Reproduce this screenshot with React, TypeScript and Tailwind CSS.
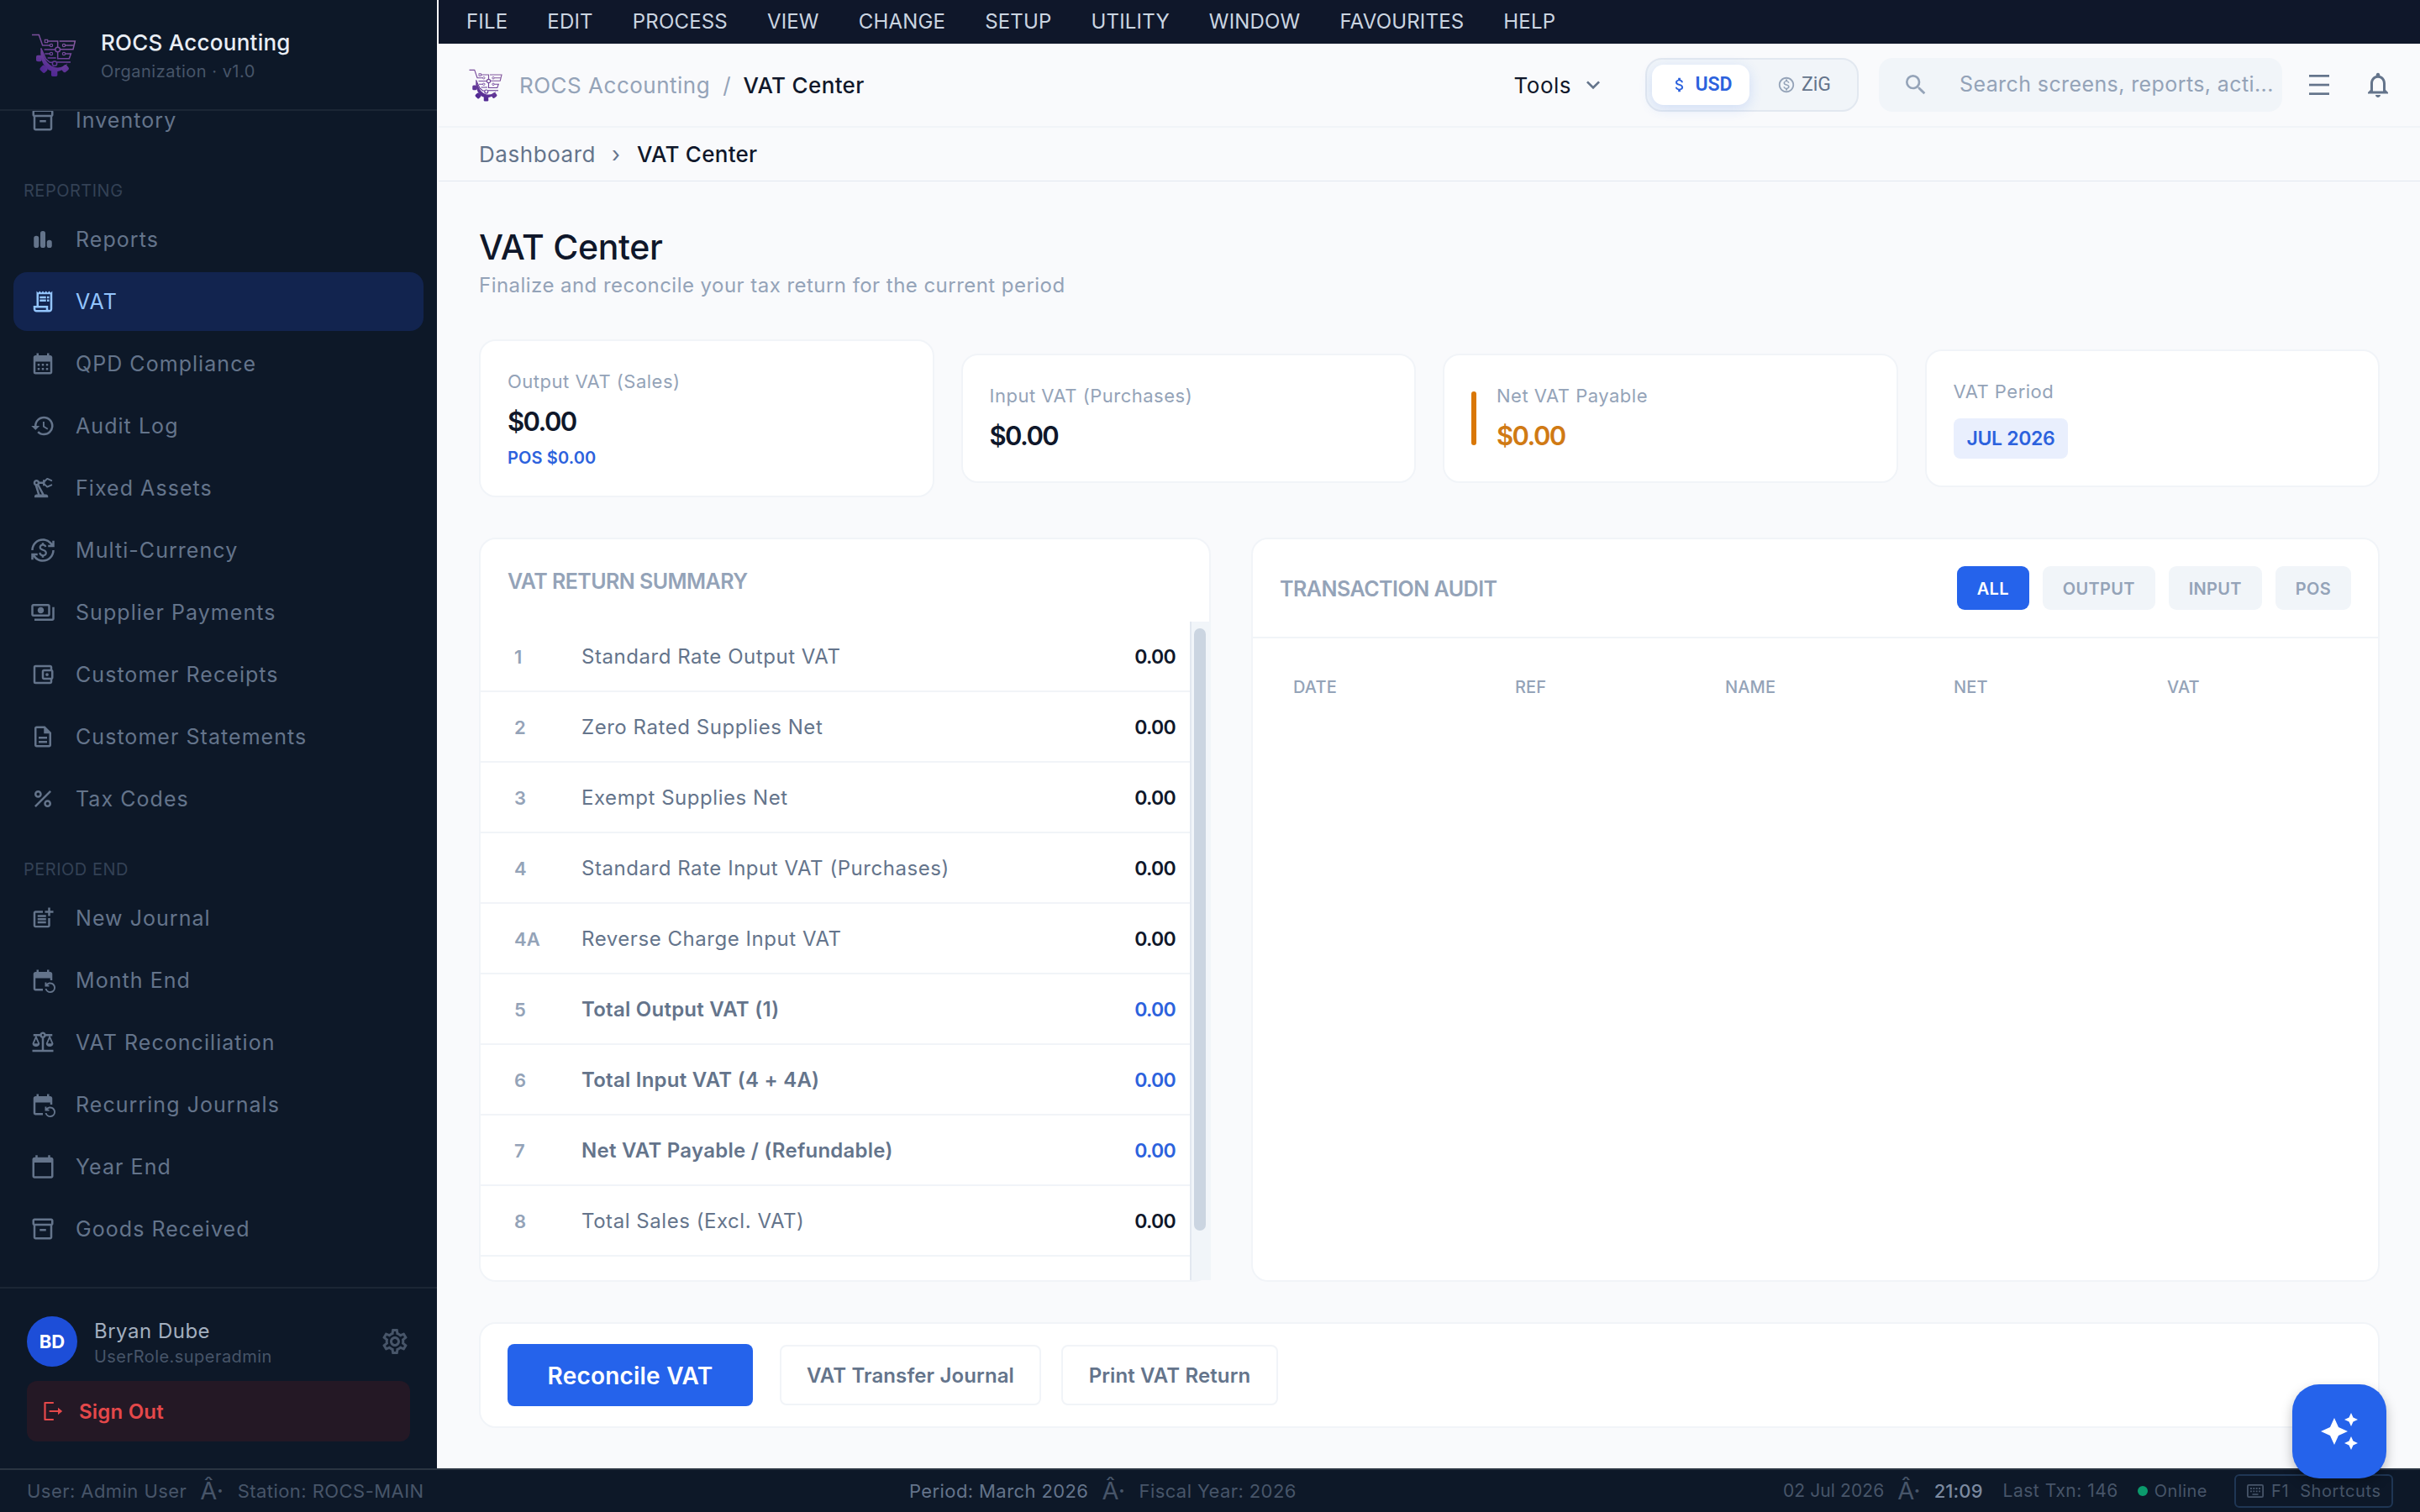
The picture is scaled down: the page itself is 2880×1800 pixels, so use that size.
import {
    MdAttachMoney, MdAutoAwesome, MdCalendarMonth, MdCalendarToday, MdCurrencyExchange,
    MdEventRepeat, MdHistory, MdKeyboardArrowDown, MdNotificationsNone, MdOutlineAccountBalanceWallet,
    MdOutlineBalance, MdOutlineDescription, MdOutlineInventory2, MdOutlineMonetizationOn,
    MdOutlinePayments, MdOutlinePrecisionManufacturing, MdOutlineReceiptLong, MdOutlineSettings, MdPercent,
    MdPostAdd, MdSearch,
} from "react-icons/md";
import type { IconType } from "react-icons";

const BarChartRounded = ({ className }: { className?: string }) => (
    <svg viewBox="0 0 24 24" fill="currentColor" className={className}>
        <rect x="3.4" y="8.6" width="4.8" height="11.4" rx="2.3" />
        <rect x="9.6" y="4" width="4.8" height="16" rx="2.3" />
        <rect x="15.8" y="12.6" width="4.8" height="7.4" rx="2.3" />
    </svg>
);

const reporting: { label: string; icon: IconType | typeof BarChartRounded; active?: boolean }[] = [
    { label: "Reports", icon: BarChartRounded },
    { label: "VAT", icon: MdOutlineReceiptLong, active: true },
    { label: "QPD Compliance", icon: MdCalendarMonth },
    { label: "Audit Log", icon: MdHistory },
    { label: "Fixed Assets", icon: MdOutlinePrecisionManufacturing },
    { label: "Multi-Currency", icon: MdCurrencyExchange },
    { label: "Supplier Payments", icon: MdOutlinePayments },
    { label: "Customer Receipts", icon: MdOutlineAccountBalanceWallet },
    { label: "Customer Statements", icon: MdOutlineDescription },
    { label: "Tax Codes", icon: MdPercent },
];

const periodEnd: typeof reporting = [
    { label: "New Journal", icon: MdPostAdd },
    { label: "Month End", icon: MdEventRepeat },
    { label: "VAT Reconciliation", icon: MdOutlineBalance },
    { label: "Recurring Journals", icon: MdEventRepeat },
    { label: "Year End", icon: MdCalendarToday },
    { label: "Goods Received", icon: MdOutlineInventory2 },
];

const menus = ["FILE", "EDIT", "PROCESS", "VIEW", "CHANGE", "SETUP", "UTILITY", "WINDOW", "FAVOURITES", "HELP"];

const vatRows = [
    { box: "1", label: "Standard Rate Output VAT", value: "0.00" },
    { box: "2", label: "Zero Rated Supplies Net", value: "0.00" },
    { box: "3", label: "Exempt Supplies Net", value: "0.00" },
    { box: "4", label: "Standard Rate Input VAT (Purchases)", value: "0.00" },
    { box: "4A", label: "Reverse Charge Input VAT", value: "0.00" },
    { box: "5", label: "Total Output VAT (1)", value: "0.00", total: true },
    { box: "6", label: "Total Input VAT (4 + 4A)", value: "0.00", total: true },
    { box: "7", label: "Net VAT Payable / (Refundable)", value: "0.00", total: true },
    { box: "8", label: "Total Sales (Excl. VAT)", value: "0.00" },
];

const filters = ["ALL", "OUTPUT", "INPUT", "POS"];

const Logo = ({ className }: { className?: string }) => (
    <svg viewBox="48 51 168 168" fill="none" className={className}>
        <defs>
            <linearGradient id="rocs" x1="180" y1="60" x2="110" y2="215" gradientUnits="userSpaceOnUse">
                <stop stopColor="#8a5f9e" />
                <stop offset="0.55" stopColor="#6d409a" />
                <stop offset="1" stopColor="#4a2391" />
            </linearGradient>
        </defs>
        <g stroke="url(#rocs)" strokeWidth="4.5">
            <path d="M54 64.5H79L92 102H117" />
            <rect x="100" y="82" width="10" height="10" strokeWidth="3.5" />
            <circle cx="123" cy="102" r="5" strokeWidth="3.5" />
            <path d="M110 87H146V108M152 87H208L201 116H156" />
            <circle cx="146" cy="117" r="8.5" />
            <circle cx="168" cy="102" r="5" strokeWidth="3.5" />
            <path d="M173 102H203M137 117H98M86 112L104 151L118 163H127" />
            <circle cx="123" cy="132" r="5" strokeWidth="3.5" />
            <path d="M100 132H118M110 147H140M146 126V149H187L193 132H173" />
            <circle cx="168" cy="132" r="5" strokeWidth="3.5" />
            <circle cx="135" cy="167" r="8" />
            <path d="M144 162H192" />
        </g>
        <g fill="url(#rocs)">
            <path d="M86 113C80 152 100 196 138 196C158 196 173 184 181 166C160 190 112 190 95 136Z" />
            <rect x="69" y="137" width="20" height="23" rx="6" />
            <rect x="84" y="176" width="24" height="22" rx="6" transform="rotate(45 96 187)" />
            <rect x="123" y="190" width="22" height="23" rx="5" />
            <rect x="160" y="174" width="24" height="22" rx="6" transform="rotate(-40 172 185)" />
        </g>
    </svg>
);

const SignOutIcon = () => (
    <svg viewBox="0 0 30 30" fill="none" className="size-[30px]">
        <path d="M15 5H5.5V25H15" stroke="currentColor" strokeWidth="2.2" strokeLinejoin="round" strokeLinecap="round" />
        <path d="M11.5 15H22" stroke="currentColor" strokeWidth="2.2" strokeLinecap="round" />
        <path d="M21 10.8L26.2 15L21 19.2Z" fill="currentColor" />
    </svg>
);

const KeyboardIcon = () => (
    <svg viewBox="0 0 20 16" fill="none" className="h-4 w-5">
        <rect x="0.9" y="0.9" width="18.2" height="14.2" rx="1.4" stroke="currentColor" strokeWidth="1.8" />
        <path d="M4 5H16M4 8.4H16" stroke="currentColor" strokeWidth="1.8" strokeDasharray="1.9 1.46" />
        <path d="M6.5 12H13.5" stroke="currentColor" strokeWidth="1.6" />
    </svg>
);

const NavItem = ({ label, icon: Icon, active }: (typeof reporting)[number]) => (
    <div className="h-[74px] shrink-0 px-4 py-0.5">
        <button className={`flex h-full w-full items-center gap-6 rounded-[16px] px-5 ${active ? "bg-[#12244f] text-[#93c5fd]" : "text-[#64748b]"}`}>
            <Icon className="size-[30px]" />
            <span className="pt-0.5 text-[25px] tracking-[1.05px]">{label}</span>
        </button>
    </div>
);

const NavLabel = ({ children }: { children: string }) => (
    <div className="flex h-[68px] shrink-0 items-end pb-[9px] pl-[28px] text-xl leading-6 tracking-[0.5px] text-[#334155]">{children}</div>
);

const Sidebar = () => (
    <aside className="flex w-[520px] shrink-0 flex-col bg-[#0d1828]">
        <div className="flex h-[132px] shrink-0 items-center gap-7 border-b-2 border-[#1b2635] pl-9">
            <Logo className="size-14" />
            <div className="flex flex-col gap-0.5 pt-0.5">
                <span className="text-[26px] leading-9 font-medium tracking-[0.25px] text-[#e9eef5]">ROCS Accounting</span>
                <span className="text-xl leading-7 tracking-[0.5px] text-[#475569]">Organization · v1.0</span>
            </div>
        </div>
        <nav className="flex min-h-0 flex-1 flex-col overflow-hidden">
            <div className="-mt-[26px] flex flex-col">
                <NavItem label="Inventory" icon={MdOutlineInventory2} />
                <NavLabel>REPORTING</NavLabel>
                {reporting.map((item) => <NavItem key={item.label} {...item} />)}
                <NavLabel>PERIOD END</NavLabel>
                {periodEnd.map((item) => <NavItem key={item.label} {...item} />)}
            </div>
        </nav>
        <div className="h-[216px] shrink-0 border-t-2 border-[#1b2635] px-8 pt-8">
            <div className="flex h-[62px] items-center">
                <div className="flex size-[60px] items-center justify-center rounded-full bg-[#1d4ed8] text-[22px] font-bold text-white">BD</div>
                <div className="ml-5 flex flex-1 flex-col pt-[3px]">
                    <span className="text-2xl leading-8 tracking-[0.5px] text-[#a3afbf]">Bryan Dube</span>
                    <span className="text-xl leading-7 tracking-[0.45px] text-[#475569]">UserRole.superadmin</span>
                </div>
                <MdOutlineSettings className="size-9 text-[#475569]" />
            </div>
            <button className="mt-4 flex h-[72px] w-[456px] items-center gap-4 rounded-[12px] bg-[#241825] pl-4 text-[#e5484a]">
                <SignOutIcon />
                <span className="pt-0.5 text-2xl font-semibold tracking-[0.2px]">Sign Out</span>
            </button>
        </div>
    </aside>
);

const TopBar = () => (
    <header className="flex h-[100px] shrink-0 items-center border-b-2 border-[#f1f4f8] pr-8 pl-[35px]">
        <Logo className="size-[42px]" />
        <div className="ml-[19px] flex text-[26px]">
            <span className="tracking-[0.5px] text-[#94a3b8]">ROCS Accounting</span>
            <span className="ml-[15px] text-[#94a3b8]">/</span>
            <span className="ml-[15px] font-medium tracking-[0.35px] text-[#0f172a]">VAT Center</span>
        </div>
        <div className="ml-auto flex items-center">
            <button className="flex items-center gap-2.5 text-[26px] tracking-[0.5px] text-[#0f172a]">
                Tools
                <MdKeyboardArrowDown className="size-8 text-[#64748b]" />
            </button>
            <div className="ml-[46px] flex h-16 w-[254px] items-center rounded-[20px] border-2 border-[#e2e8f0] bg-[#f1f5f9] pl-1.5 font-['Roboto'] text-[23px]">
                <div className="flex h-12 w-[116px] items-center justify-center gap-[7px] rounded-[14px] bg-white pl-0.5 font-semibold text-[#2c62dd] shadow-[0_4px_16px_rgba(37,99,235,0.16)]">
                    <MdAttachMoney className="size-[22px]" />
                    USD
                </div>
                <div className="ml-[33px] flex items-center gap-[7px] text-[#64748b]">
                    <MdOutlineMonetizationOn className="size-[22px] text-[#94a3b8]" />
                    ZiG
                </div>
            </div>
            <div className="ml-6 flex h-16 w-[480px] items-center gap-9 rounded-[16px] bg-[#f1f5f9] pl-7 text-[#94a3b8]">
                <MdSearch className="size-8" />
                <span className="text-[25px] tracking-[0.4px] whitespace-nowrap">Search screens, reports, acti...</span>
            </div>
            <svg viewBox="0 0 24 24" fill="#64748b" className="ml-8 size-6">
                <rect y="0" width="24" height="2.7" />
                <rect y="10.7" width="24" height="2.7" />
                <rect y="21.3" width="24" height="2.7" />
            </svg>
            <MdNotificationsNone className="ml-10 size-9 text-[#64748b]" />
        </div>
    </header>
);

const cardClass = "flex flex-1 items-center rounded-[20px] border-2 border-[#f1f4f8] bg-white p-8";

const Kpi = ({ label, value, tone }: { label: string; value: string; tone?: string }) => (
    <>
        <p className="text-[22px] leading-8 tracking-[0.5px] text-[#94a3b8]">{label}</p>
        <p className={`mt-2.5 text-[31px] leading-[44px] font-semibold tracking-[-1.6px] ${tone ?? "text-[#0f172a]"}`}>{value}</p>
    </>
);

const Summary = () => (
    <section className="flex w-[871px] shrink-0 flex-col rounded-[20px] border-2 border-[#f1f4f8] bg-white">
        <h2 className="flex h-[98px] shrink-0 items-center pt-[3px] pl-8 text-[25px] font-semibold tracking-[-0.55px] text-[#94a3b8]">VAT RETURN SUMMARY</h2>
        <div className="-mr-0.5 flex min-h-0 flex-1">
            <div className="flex-1 overflow-hidden">
                {vatRows.map((row) => (
                    <div key={row.box} className="flex h-[84px] items-center border-b-2 border-[#f1f4f8] pt-0.5 pr-[17px] pl-10">
                        <span className="w-20 text-[22px] font-semibold text-[#94a3b8]">{row.box}</span>
                        <span className={`text-2xl text-[#64748b] ${row.total ? "font-semibold tracking-[0.25px]" : "tracking-[0.55px]"}`}>{row.label}</span>
                        <span className={`ml-auto text-[23px] font-semibold tracking-[-0.7px] ${row.total ? "text-[#2c62dd]" : "text-[#0f172a]"}`}>{row.value}</span>
                    </div>
                ))}
            </div>
            <div className="w-[25px] border-l-2 border-[#e2e8f0] bg-[#f1f5f9] pt-2 pl-[3px]">
                <div className="h-[717px] w-[14px] rounded-full bg-[#cbd5e1]" />
            </div>
        </div>
    </section>
);

const Audit = () => (
    <section className="flex flex-1 flex-col rounded-[20px] border-2 border-[#f1f4f8] bg-white">
        <div className="flex h-[118px] items-center justify-between border-b-2 border-[#f1f4f8] px-8">
            <h2 className="pt-[3px] text-[25px] font-semibold tracking-[-0.5px] text-[#94a3b8]">TRANSACTION AUDIT</h2>
            <div className="flex gap-4">
                {filters.map((f, i) => (
                    <button key={f} className={`h-[52px] rounded-[9px] px-6 pt-0.5 text-xl font-semibold tracking-[0.3px] ${i === 0 ? "bg-[#2563eb] text-white" : "bg-[#f1f5f9] text-[#94a3b8]"}`}>{f}</button>
                ))}
            </div>
        </div>
        <div className="grid grid-cols-[264px_250px_272px_254px_1fr] pt-11 pl-12 text-xl leading-7 font-medium tracking-[0.15px] text-[#94a3b8]">
            <span>DATE</span>
            <span>REF</span>
            <span>NAME</span>
            <span>NET</span>
            <span>VAT</span>
        </div>
    </section>
);

const StatusBar = () => (
    <footer className="flex h-[52px] shrink-0 items-center border-t-2 border-[#2a3441] bg-[#0d1828] px-8 text-[22px] whitespace-nowrap text-[#475569]">
        <div className="flex w-[1050px] items-center tracking-[0.45px]">
            <span>User: Admin User</span>
            <span className="ml-4 text-[29px]">Â·</span>
            <span className="ml-4">Station: ROCS-MAIN</span>
        </div>
        <div className="flex items-center tracking-[0.4px]">
            <span className="text-[#64748b]">Period: March 2026</span>
            <span className="ml-4 text-[29px]">Â·</span>
            <span className="ml-4">Fiscal Year: 2026</span>
        </div>
        <div className="ml-auto flex items-center">
            <span className="text-[21px] tracking-[0.1px]">02 Jul 2026</span>
            <span className="ml-4 text-[29px]">Â·</span>
            <span className="ml-4 font-medium tracking-[0.1px] text-[#7c8aa0]">21:09</span>
            <span className="ml-6 text-[21px] tracking-[0.5px]">Last Txn: 146</span>
            <span className="ml-[23px] size-3 rounded-full bg-[#0b9a6c]" />
            <span className="ml-2 text-xl tracking-[0.48px]">Online</span>
            <div className="ml-8 flex h-10 w-[189px] items-center rounded-md border-2 border-[#1f3654] pl-[13px] text-xl tracking-[0.6px]">
                <KeyboardIcon />
                <span className="ml-[9px]">F1</span>
                <span className="ml-[13px]">Shortcuts</span>
            </div>
        </div>
    </footer>
);

export default function App() {
    return (
        <div className="relative flex h-[1800px] w-[2880px] flex-col overflow-hidden bg-[#f9fafc] font-['Inter',sans-serif]">
            <div className="flex min-h-0 flex-1">
                <Sidebar />
                <div className="ml-0.5 flex min-w-0 flex-1 flex-col">
                    <div className="flex h-[52px] shrink-0 items-center gap-[47px] bg-[#0f172a] pl-[33px] text-2xl tracking-[0.18px] text-[#cbd5e1]">
                        {menus.map((m) => <span key={m}>{m}</span>)}
                    </div>
                    <TopBar />
                    <div className="flex h-16 shrink-0 items-center border-b border-[#e2e8f0] pl-12 text-[26px]">
                        <span className="tracking-[0.55px] text-[#64748b]">Dashboard</span>
                        <span className="ml-[19px] text-[#64748b]">›</span>
                        <span className="ml-5 font-medium tracking-[0.28px] text-[#0f172a]">VAT Center</span>
                    </div>
                    <main className="flex min-h-0 flex-1 flex-col px-12 pb-12">
                        <h1 className="mt-[52px] text-[41px] leading-[52px] font-medium tracking-[-0.3px] text-[#0f172a]">VAT Center</h1>
                        <p className="mt-1 text-2xl leading-8 tracking-[0.46px] text-[#94a3b8]">Finalize and reconcile your tax return for the current period</p>
                        <div className="mt-12 flex h-[188px] shrink-0 items-center gap-8">
                            <div className={cardClass}>
                                <div>
                                    <Kpi label="Output VAT (Sales)" value="$0.00" />
                                    <p className="mt-[7px] -mb-px text-xl leading-7 font-semibold tracking-[0.13px] text-[#2c62dd]">POS $0.00</p>
                                </div>
                            </div>
                            <div className={cardClass}>
                                <div>
                                    <Kpi label="Input VAT (Purchases)" value="$0.00" />
                                </div>
                            </div>
                            <div className={cardClass}>
                                <div className="mr-6 h-16 w-1.5 rounded-sm bg-[#d97706]" />
                                <div>
                                    <Kpi label="Net VAT Payable" value="$0.00" tone="text-[#d07a14]" />
                                </div>
                            </div>
                            <div className={cardClass}>
                                <div>
                                    <p className="text-[22px] leading-8 tracking-[0.5px] text-[#94a3b8]">VAT Period</p>
                                    <span className="mt-4 flex h-12 items-center rounded-[8px] bg-[#e9effd] px-4 pt-px text-[23px] font-semibold tracking-[-0.35px] text-[#2c62dd]">JUL 2026</span>
                                </div>
                            </div>
                        </div>
                        <div className="mt-12 flex h-[886px] shrink-0 gap-12">
                            <Summary />
                            <Audit />
                        </div>
                        <div className="mt-12 flex h-[126px] shrink-0 items-center rounded-[20px] border-2 border-[#f1f4f8] bg-white px-8">
                            <button className="h-[74px] w-[292px] rounded-[8px] bg-[#2563eb] pt-px text-[28px] font-semibold tracking-[0.2px] text-white">Reconcile VAT</button>
                            <button className="ml-8 h-[72px] w-[311px] rounded-[8px] border-2 border-[#f1f4f8] pt-px text-2xl font-semibold tracking-[0.12px] text-[#64748b]">VAT Transfer Journal</button>
                            <button className="ml-6 h-[72px] w-[258px] rounded-[8px] border-2 border-[#f1f4f8] pt-px text-2xl font-semibold tracking-[0.12px] text-[#64748b]">Print VAT Return</button>
                        </div>
                    </main>
                </div>
            </div>
            <StatusBar />
            <button className="absolute right-10 bottom-10 flex size-28 items-center justify-center rounded-[32px] bg-[#2563eb] text-white shadow-[0_6px_14px_rgba(0,0,0,0.25)]">
                <MdAutoAwesome className="size-12" />
            </button>
        </div>
    );
}
